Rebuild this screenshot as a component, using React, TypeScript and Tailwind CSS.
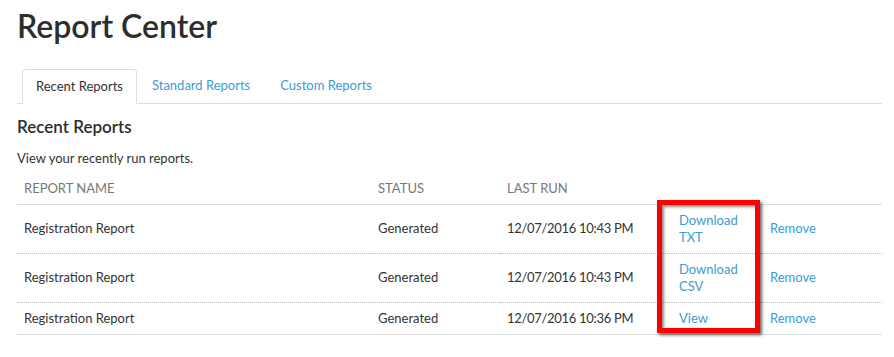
import React from "react";

const rows = [
  { name: "Registration Report", status: "Generated", lastRun: "12/07/2016 10:43 PM", action: ["Download", "TXT"] },
  { name: "Registration Report", status: "Generated", lastRun: "12/07/2016 10:43 PM", action: ["Download", "CSV"] },
  { name: "Registration Report", status: "Generated", lastRun: "12/07/2016 10:36 PM", action: ["View"] },
];

const tabs = ["Recent Reports", "Standard Reports", "Custom Reports"];

const App: React.FC = () => {
  return (
    <div className="w-[894px] h-[357px] bg-white overflow-hidden px-[17px] pr-[12px] text-[#333] font-['Lato','Liberation_Sans',sans-serif]">
      <h1 className="pt-[6px] text-[32px] leading-[40px] font-semibold text-[#2d2d2d]">Report Center</h1>

      <div className="mt-[23px] flex border-b border-[#ddd] pl-[5px] text-[13px]">
        {tabs.map((t, i) => (
          <div
            key={t}
            className={
              i === 0
                ? "-mb-px h-[35px] px-[13px] flex items-center border border-b-white border-[#ddd] rounded-t-[4px] bg-white text-[#333]"
                : "h-[34px] px-[15px] flex items-center text-[#3b9bd8]"
            }
          >
            {t}
          </div>
        ))}
      </div>

      <h2 className="mt-[12px] text-[17px] leading-[22px] font-semibold text-[#2d2d2d]">Recent Reports</h2>
      <p className="mt-[11px] text-[13px] leading-[18px]">View your recently run reports.</p>

      <div className="relative mt-[4px]">
        <table className="w-full text-[13px] border-collapse table-fixed">
          <thead>
            <tr className="border-b border-[#ddd] h-[33px] text-[#777] text-left">
              <th className="w-[354px] px-[7px] pt-[2px] font-normal">REPORT NAME</th>
              <th className="w-[129px] px-[7px] pt-[2px] font-normal">STATUS</th>
              <th className="w-[172px] px-[7px] pt-[2px] font-normal">LAST RUN</th>
              <th className="w-[91px] px-[7px] font-normal"></th>
              <th className="px-[7px] font-normal"></th>
            </tr>
          </thead>
          <tbody>
            {rows.map((r, i) => (
              <tr
                key={i}
                className={
                  i === rows.length - 1
                    ? "border-b border-[#ddd]"
                    : "border-b border-dotted border-[#bbb]"
                }
              >
                <td className="px-[7px] py-[7px] leading-[17px]">{r.name}</td>
                <td className="px-[7px] py-[7px] leading-[17px]">{r.status}</td>
                <td className="px-[7px] py-[7px] leading-[17px] tracking-[-0.3px]">{r.lastRun}</td>
                <td className="px-[7px] py-[7px] leading-[17px] text-[#3b9bd8]">
                  {r.action.map((a) => (
                    <div key={a}>{a}</div>
                  ))}
                </td>
                <td className="px-[7px] py-[7px] leading-[17px] text-[#3b9bd8]">Remove</td>
              </tr>
            ))}
          </tbody>
        </table>
        <div className="absolute left-[640px] top-[29px] w-[103px] h-[133px] border-[5px] border-[#ff0000] shadow-[2px_2px_3px_rgba(0,0,0,0.6),inset_2px_2px_3px_rgba(0,0,0,0.45)] pointer-events-none" />
      </div>
    </div>
  );
};

export default App;
